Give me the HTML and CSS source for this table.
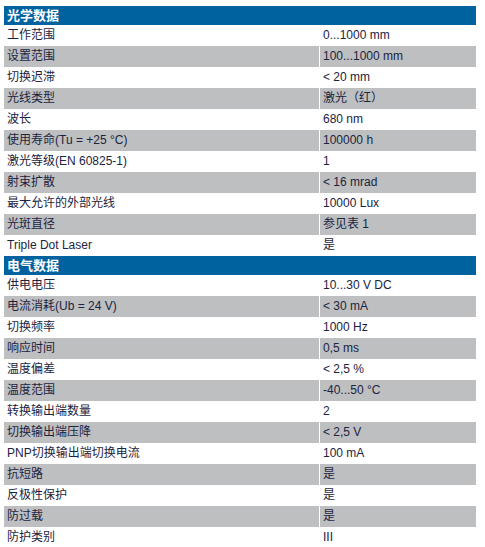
FILE: index.html
```html
<!DOCTYPE html>
<html lang="zh">
<head>
<meta charset="utf-8">
<link rel="stylesheet" href="styles.css">
</head>
<body>
<div class="sheet">
  <div class="head">光学数据</div>
  <div class="row"><div class="k">工作范围</div><div class="v">0...1000 mm</div></div>
  <div class="row alt"><div class="k">设置范围</div><div class="v">100...1000 mm</div></div>
  <div class="row"><div class="k">切换迟滞</div><div class="v">&lt; 20 mm</div></div>
  <div class="row alt"><div class="k">光线类型</div><div class="v">激光（红）</div></div>
  <div class="row"><div class="k">波长</div><div class="v">680 nm</div></div>
  <div class="row alt"><div class="k">使用寿命(Tu = +25 °C)</div><div class="v">100000 h</div></div>
  <div class="row"><div class="k">激光等级(EN 60825-1)</div><div class="v">1</div></div>
  <div class="row alt"><div class="k">射束扩散</div><div class="v">&lt; 16 mrad</div></div>
  <div class="row"><div class="k">最大允许的外部光线</div><div class="v">10000 Lux</div></div>
  <div class="row alt"><div class="k">光斑直径</div><div class="v">参见表 1</div></div>
  <div class="row"><div class="k">Triple Dot Laser</div><div class="v">是</div></div>
  <div class="head">电气数据</div>
  <div class="row"><div class="k">供电电压</div><div class="v">10...30 V DC</div></div>
  <div class="row alt"><div class="k">电流消耗(Ub = 24 V)</div><div class="v">&lt; 30 mA</div></div>
  <div class="row"><div class="k">切换频率</div><div class="v">1000 Hz</div></div>
  <div class="row alt"><div class="k">响应时间</div><div class="v">0,5 ms</div></div>
  <div class="row"><div class="k">温度偏差</div><div class="v">&lt; 2,5 %</div></div>
  <div class="row alt"><div class="k">温度范围</div><div class="v">-40...50 °C</div></div>
  <div class="row"><div class="k">转换输出端数量</div><div class="v">2</div></div>
  <div class="row alt"><div class="k">切换输出端压降</div><div class="v">&lt; 2,5 V</div></div>
  <div class="row"><div class="k">PNP切换输出端切换电流</div><div class="v">100 mA</div></div>
  <div class="row alt"><div class="k">抗短路</div><div class="v">是</div></div>
  <div class="row"><div class="k">反极性保护</div><div class="v">是</div></div>
  <div class="row alt"><div class="k">防过载</div><div class="v">是</div></div>
  <div class="row"><div class="k">防护类别</div><div class="v">III</div></div>
</div>
</body>
</html>
```
FILE: styles.css
```css
html, body {
  margin: 0;
  padding: 0;
  background: #ffffff;
}
body {
  font-family: "Liberation Sans", Arial, "Noto Sans CJK SC", sans-serif;
  font-size: 12px;
  color: #1c2440;
}
.sheet {
  width: 472px;
  padding: 6px 0 0 4px;
}
.head {
  height: 19px;
  line-height: 19px;
  background: #00629f;
  color: #ffffff;
  font-weight: bold;
  font-size: 13px;
  padding-left: 3px;
}
.row {
  display: grid;
  grid-template-columns: 315px 156px;
  column-gap: 1px;
  height: 21px;
}
.k, .v {
  line-height: 21px;
  padding-left: 3px;
  white-space: nowrap;
  overflow: hidden;
}
.alt .k, .alt .v {
  background: #bebfc1;
}
```
